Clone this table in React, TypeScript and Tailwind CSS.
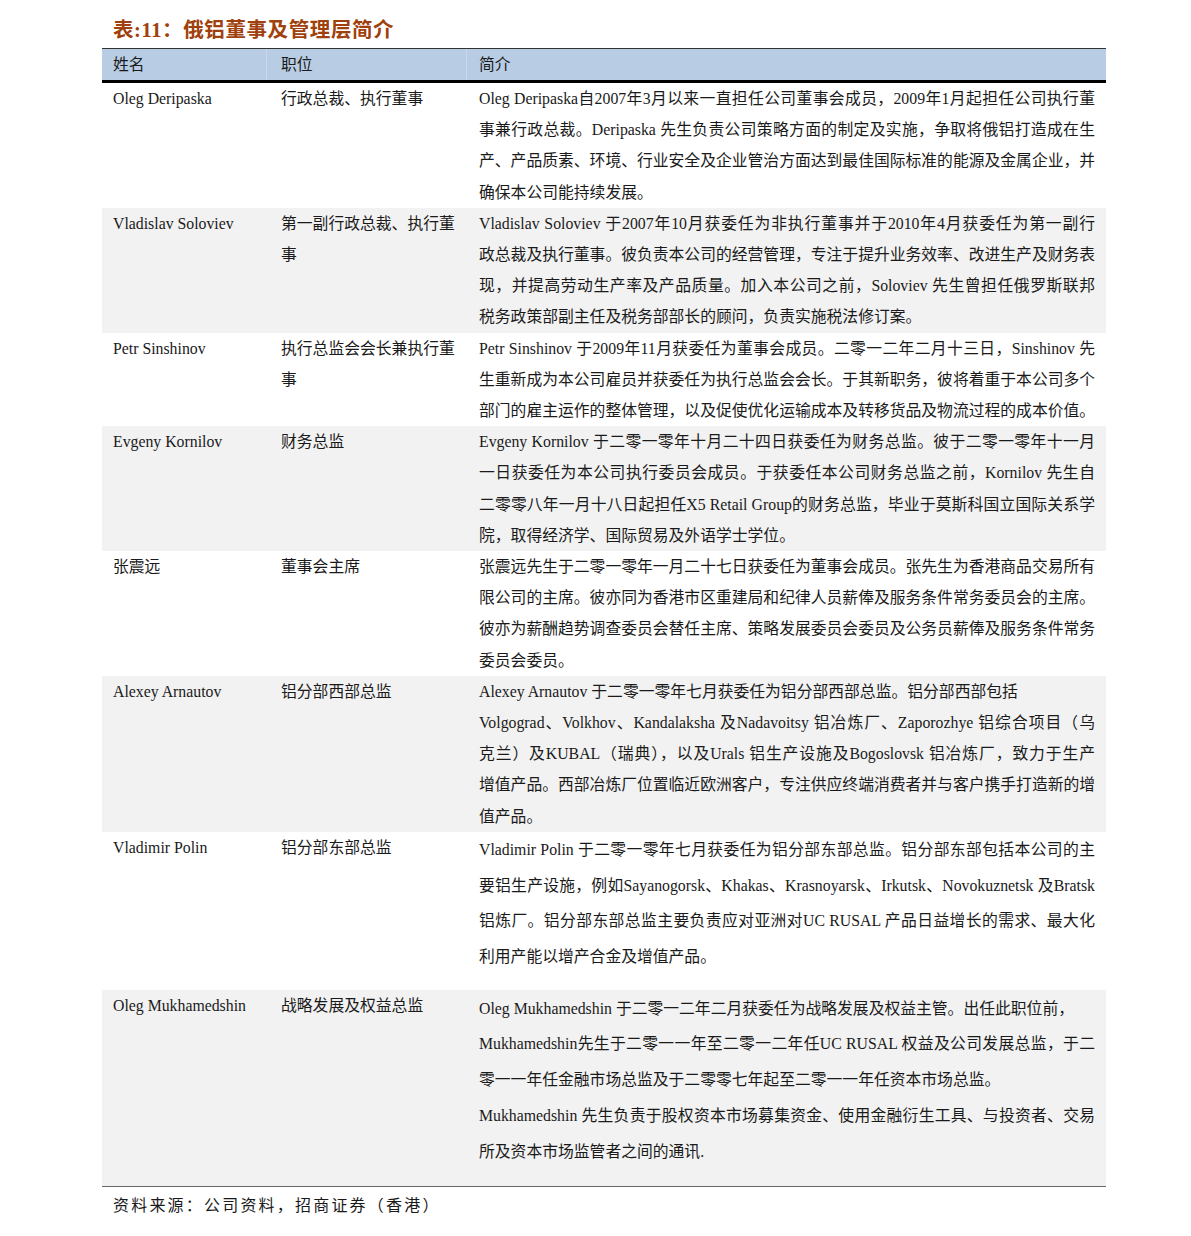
import React from "react";

type Row = {
  name: string;
  position: string[];
  lines: string[];
  breaks?: number[];
  gray?: boolean;
  tall?: boolean;
};

const rows: Row[] = [
  {
    name: "Oleg Deripaska",
    position: ["行政总裁、执行董事"],
    lines: [
      "Oleg Deripaska自2007年3月以来一直担任公司董事会成员，2009年1月起担任公司执行董",
      "事兼行政总裁。Deripaska 先生负责公司策略方面的制定及实施，争取将俄铝打造成在生",
      "产、产品质素、环境、行业安全及企业管治方面达到最佳国际标准的能源及金属企业，并",
      "确保本公司能持续发展。",
    ],
  },
  {
    name: "Vladislav Soloviev",
    position: ["第一副行政总裁、执行董", "事"],
    gray: true,
    lines: [
      "Vladislav Soloviev  于2007年10月获委任为非执行董事并于2010年4月获委任为第一副行",
      "政总裁及执行董事。彼负责本公司的经营管理，专注于提升业务效率、改进生产及财务表",
      "现，并提高劳动生产率及产品质量。加入本公司之前，Soloviev 先生曾担任俄罗斯联邦",
      "税务政策部副主任及税务部部长的顾问，负责实施税法修订案。",
    ],
  },
  {
    name: "Petr Sinshinov",
    position: ["执行总监会会长兼执行董", "事"],
    lines: [
      "Petr Sinshinov 于2009年11月获委任为董事会成员。二零一二年二月十三日，Sinshinov 先",
      "生重新成为本公司雇员并获委任为执行总监会会长。于其新职务，彼将着重于本公司多个",
      "部门的雇主运作的整体管理，以及促使优化运输成本及转移货品及物流过程的成本价值。",
    ],
  },
  {
    name: "Evgeny Kornilov",
    position: ["财务总监"],
    gray: true,
    lines: [
      "Evgeny Kornilov 于二零一零年十月二十四日获委任为财务总监。彼于二零一零年十一月",
      "一日获委任为本公司执行委员会成员。于获委任本公司财务总监之前，Kornilov 先生自",
      "二零零八年一月十八日起担任X5 Retail Group的财务总监，毕业于莫斯科国立国际关系学",
      "院，取得经济学、国际贸易及外语学士学位。",
    ],
  },
  {
    name: "张震远",
    position: ["董事会主席"],
    lines: [
      "张震远先生于二零一零年一月二十七日获委任为董事会成员。张先生为香港商品交易所有",
      "限公司的主席。彼亦同为香港市区重建局和纪律人员薪俸及服务条件常务委员会的主席。",
      "彼亦为薪酬趋势调查委员会替任主席、策略发展委员会委员及公务员薪俸及服务条件常务",
      "委员会委员。",
    ],
  },
  {
    name: "Alexey Arnautov",
    position: ["铝分部西部总监"],
    gray: true,
    breaks: [0],
    lines: [
      "Alexey Arnautov 于二零一零年七月获委任为铝分部西部总监。铝分部西部包括",
      "Volgograd、Volkhov、Kandalaksha 及Nadavoitsy 铝冶炼厂、Zaporozhye 铝综合项目（乌",
      "克兰）及KUBAL（瑞典），以及Urals 铝生产设施及Bogoslovsk 铝冶炼厂，致力于生产",
      "增值产品。西部冶炼厂位置临近欧洲客户，专注供应终端消费者并与客户携手打造新的增",
      "值产品。",
    ],
  },
  {
    name: "Vladimir Polin",
    position: ["铝分部东部总监"],
    tall: true,
    lines: [
      "Vladimir Polin 于二零一零年七月获委任为铝分部东部总监。铝分部东部包括本公司的主",
      "要铝生产设施，例如Sayanogorsk、Khakas、Krasnoyarsk、Irkutsk、Novokuznetsk 及Bratsk",
      "铝炼厂。铝分部东部总监主要负责应对亚洲对UC RUSAL 产品日益增长的需求、最大化",
      "利用产能以增产合金及增值产品。",
    ],
  },
  {
    name: "Oleg Mukhamedshin",
    position: ["战略发展及权益总监"],
    gray: true,
    tall: true,
    breaks: [0, 2],
    lines: [
      "Oleg Mukhamedshin 于二零一二年二月获委任为战略发展及权益主管。出任此职位前，",
      "Mukhamedshin先生于二零一一年至二零一二年任UC RUSAL 权益及公司发展总监，于二",
      "零一一年任金融市场总监及于二零零七年起至二零一一年任资本市场总监。",
      "Mukhamedshin 先生负责于股权资本市场募集资金、使用金融衍生工具、与投资者、交易",
      "所及资本市场监管者之间的通讯.",
    ],
  },
];

function DescLine({ text, justify }: { text: string; justify: boolean }) {
  return (
    <div
      className={
        justify
          ? "whitespace-nowrap text-justify [text-align-last:justify]"
          : "whitespace-nowrap text-left"
      }
    >
      {text}
    </div>
  );
}

export default function App() {
  return (
    <div className="min-h-screen w-full bg-white text-[#1a1a1a] [font-family:'Liberation_Serif','Noto_Sans_CJK_SC',serif]">
      <div className="ml-[102px] w-[1004px] pt-[18px]">
        {/* title */}
        <div className="pl-[11px] mb-[6px] h-[24px] leading-[24px] text-[20.5px] font-bold text-[#a0410d] tracking-[0.6px]">
          表:11：俄铝董事及管理层简介
        </div>

        {/* header */}
        <div className="grid grid-cols-[165px_200px_639px] border-t border-[#333] border-b-[3px] border-b-black bg-[#b8cce4] h-[35px] text-[15.8px] leading-[31px]">
          <div className="pl-[11px] border-r border-[#c9d8ea]">姓名</div>
          <div className="pl-[14px] border-r border-[#c9d8ea]">职位</div>
          <div className="pl-[12px]">简介</div>
        </div>

        {/* body */}
        <div className="border-b border-[#666]">
          {rows.map((r, i) => (
            <div
              key={i}
              className={`grid grid-cols-[165px_200px_639px] text-[15.8px] ${
                r.gray ? "bg-[#f2f2f2]" : "bg-white"
              } ${r.tall ? (i === rows.length - 1 ? "pb-[17px]" : "pb-[15px]") : ""}`}
            >
              <div className="pl-[11px] leading-[31.2px] whitespace-nowrap">{r.name}</div>
              <div className="pl-[14px] leading-[31.2px]">
                {r.position.map((p, j) => (
                  <div key={j} className="whitespace-nowrap">
                    {p}
                  </div>
                ))}
              </div>
              <div
                className={`pl-[12px] pr-[11px] ${
                  r.tall ? "leading-[35.7px]" : "leading-[31.2px]"
                } ${r.tall && i === rows.length - 1 ? "pt-[1px]" : ""}`}
              >
                {r.lines.map((l, j) => (
                  <DescLine
                    key={j}
                    text={l}
                    justify={j < r.lines.length - 1 && !(r.breaks ?? []).includes(j)}
                  />
                ))}
              </div>
            </div>
          ))}
        </div>

        {/* source */}
        <div className="pl-[11px] mt-[7px] leading-[24px] text-[16px] tracking-[2.2px]">
          资料来源：公司资料，招商证券（香港）
        </div>
      </div>
    </div>
  );
}
